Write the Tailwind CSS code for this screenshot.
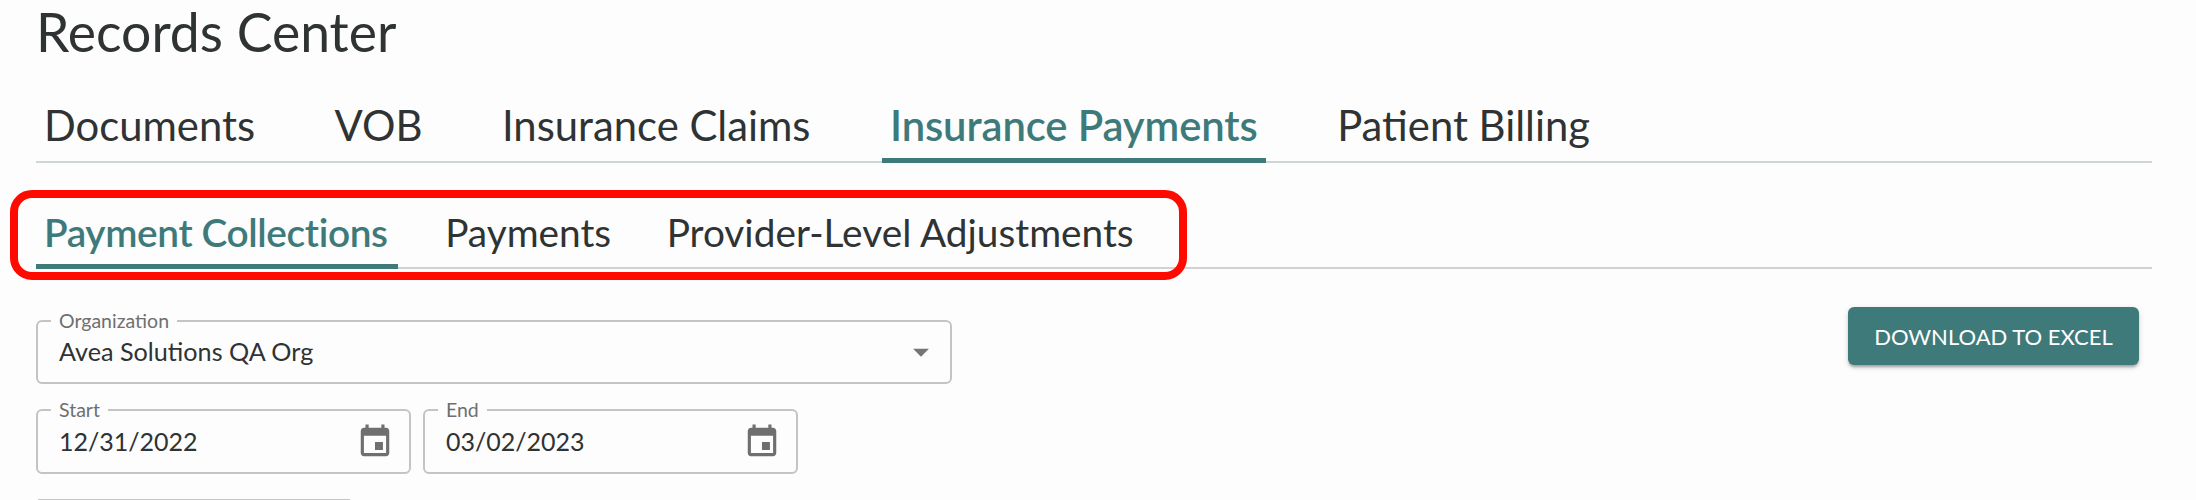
<!DOCTYPE html>
<html lang="en">
<head>
    <meta charset="UTF-8">
    <title>Records Center</title>
    <script src="https://cdn.jsdelivr.net/npm/@tailwindcss/browser@4"></script>
</head>
<body class="relative h-[500px] overflow-hidden bg-[#fdfdfd] font-['Lato',sans-serif] text-[#2f3333]">
    <main class="ml-[36px] w-[2116px]">
        <h1 class="h-[72px] text-[53.5px] leading-[63px]">Records Center</h1>

        <!-- Main tabs -->
        <nav class="flex h-[91px] items-end gap-[63.5px] border-b-2 border-[#cfd6d6] text-[41.8px]">
            <a class="h-[70px] px-[8px] leading-[68px]">Documents</a>
            <a class="h-[70px] px-[8px] leading-[68px]">VOB</a>
            <a class="h-[70px] px-[8px] leading-[68px]">Insurance Claims</a>
            <a class="-mb-[2px] h-[72px] border-b-[5px] border-[#3f7a7b] px-[8px] leading-[68px] font-semibold tracking-[-0.1px] text-[#3f7a7b]">Insurance Payments</a>
            <a class="h-[70px] px-[8px] leading-[68px]">Patient Billing</a>
        </nav>

        <!-- Sub tabs -->
        <nav class="flex h-[106px] items-end gap-[39.5px] border-b-2 border-[#d2d2d2] text-[38.8px]">
            <a class="-mb-[2px] h-[66px] border-b-[5px] border-[#3f7a7b] pl-[8px] pr-[10px] leading-[58px] font-semibold tracking-[-0.37px] text-[#3f7a7b]">Payment Collections</a>
            <a class="h-[64px] px-[8px] leading-[58px]">Payments</a>
            <a class="h-[64px] px-[8px] leading-[58px]">Provider-Level Adjustments</a>
        </nav>

        <section class="flex items-start justify-between pr-[13px]">
            <div>
                <div class="relative mt-[51px] flex h-[64px] w-[916px] items-center justify-between rounded-[6px] border-2 border-[#c4c4c4] pl-[21px] pr-[10px] text-[25.2px]">
                    <span class="absolute -top-[12px] left-[13px] bg-[#fdfdfd] px-[8px] text-[19.5px] leading-[22px] text-[#6f6f6f]">Organization</span>
                    <span>Avea Solutions QA Org</span>
                    <svg class="h-[38px] w-[38px] text-[#757575]" viewBox="0 0 24 24" fill="currentColor"><path d="M7 10l5 5 5-5z"/></svg>
                </div>

                <div class="mt-[25px] flex gap-[12px]">
                    <div class="relative flex h-[65px] w-[375px] items-center justify-between rounded-[6px] border-2 border-[#c4c4c4] pl-[21px] pr-[15px] text-[25px]">
                        <span class="absolute -top-[12px] left-[13px] bg-[#fdfdfd] px-[8px] text-[19.5px] leading-[22px] text-[#6f6f6f]">Start</span>
                        <span>12/31/2022</span>
                        <svg class="h-[38px] w-[38px] text-[#6f6f6f]" viewBox="0 0 24 24" fill="currentColor"><path d="M17 12h-5v5h5v-5zM16 1v2H8V1H6v2H5c-1.11 0-1.99.9-1.99 2L3 19c0 1.1.89 2 2 2h14c1.1 0 2-.9 2-2V5c0-1.1-.9-2-2-2h-1V1h-2zm3 18H5V8h14v11z"/></svg>
                    </div>
                    <div class="relative flex h-[65px] w-[375px] items-center justify-between rounded-[6px] border-2 border-[#c4c4c4] pl-[21px] pr-[15px] text-[25px]">
                        <span class="absolute -top-[12px] left-[13px] bg-[#fdfdfd] px-[8px] text-[19.5px] leading-[22px] text-[#6f6f6f]">End</span>
                        <span>03/02/2023</span>
                        <svg class="h-[38px] w-[38px] text-[#6f6f6f]" viewBox="0 0 24 24" fill="currentColor"><path d="M17 12h-5v5h5v-5zM16 1v2H8V1H6v2H5c-1.11 0-1.99.9-1.99 2L3 19c0 1.1.89 2 2 2h14c1.1 0 2-.9 2-2V5c0-1.1-.9-2-2-2h-1V1h-2zm3 18H5V8h14v11z"/></svg>
                    </div>
                </div>

                <div class="ml-[2px] mt-[25px] h-[1px] w-[312px] border-t-2 border-[#c4c4c4]"></div>
            </div>

            <button class="mt-[38px] h-[58px] w-[291px] rounded-[6px] bg-[#3f7a7b] text-[22px] text-white shadow-[0_3px_3px_-1px_rgba(0,0,0,0.3),0_2px_6px_rgba(0,0,0,0.14)]">DOWNLOAD TO EXCEL</button>
        </section>
    </main>

    <!-- Red annotation round the sub tabs -->
    <div class="absolute left-[10px] top-[190px] h-[90px] w-[1177px] rounded-[22px] border-[8px] border-[#ff0a00]"></div>
</body>
</html>
